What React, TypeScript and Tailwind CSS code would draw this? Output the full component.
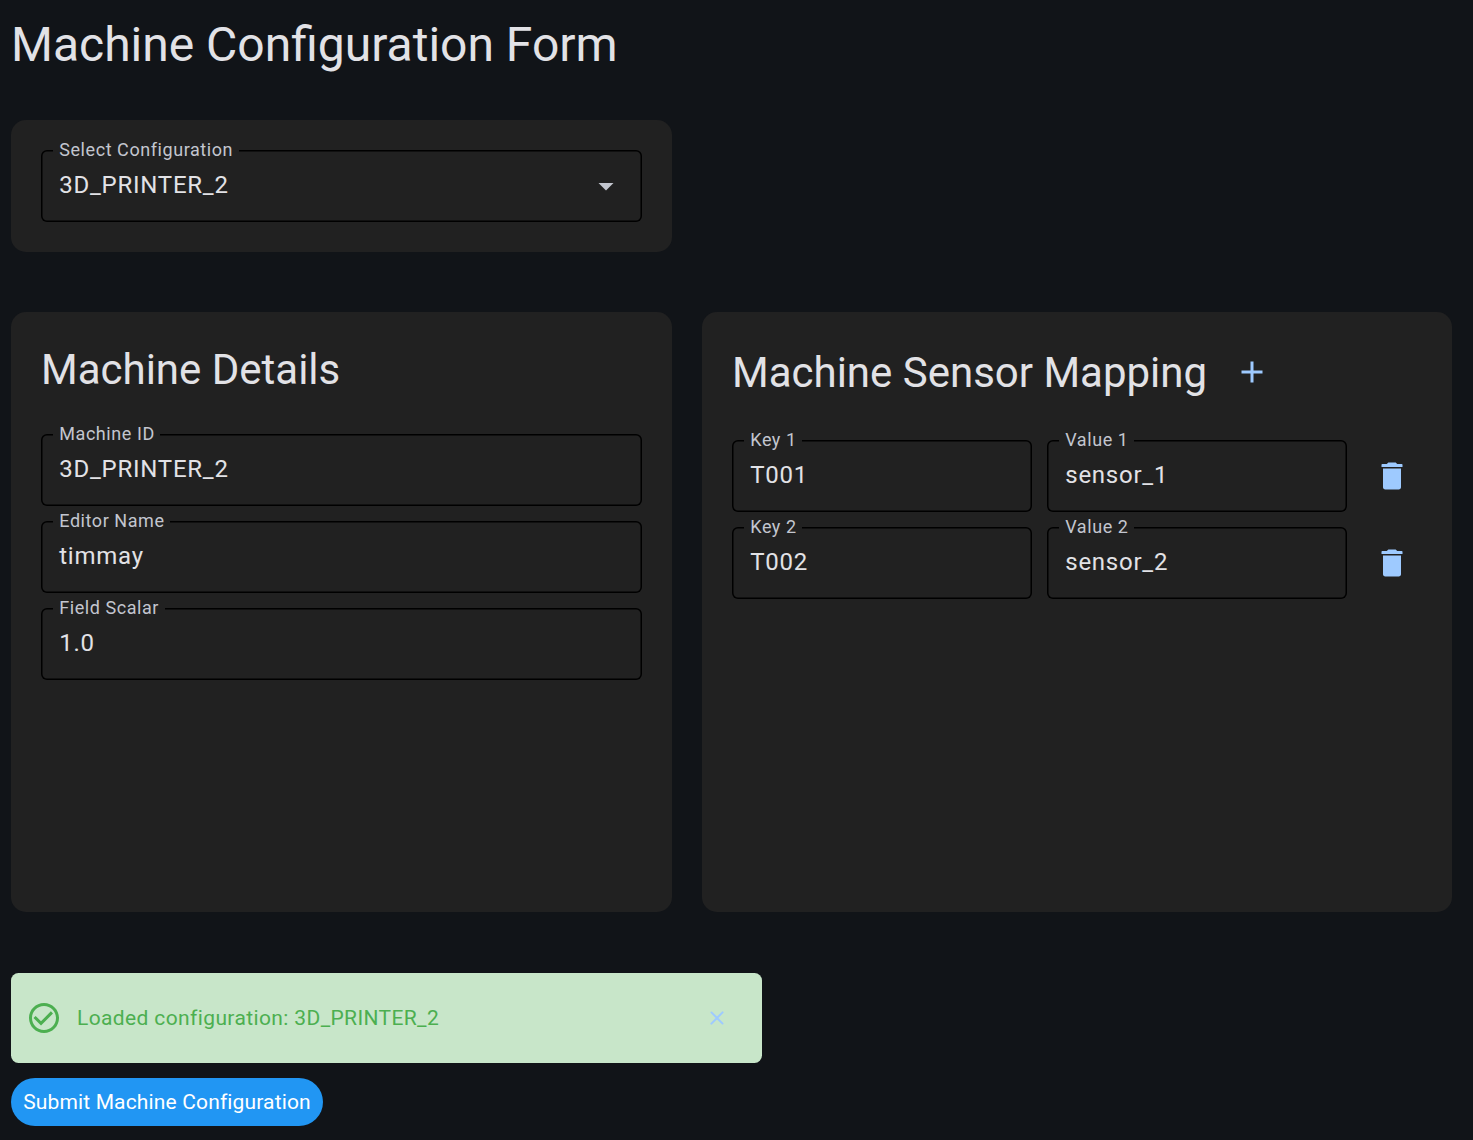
import type { ReactNode } from 'react';

type FieldProps = {
  label: string;
  value: string;
  width?: string;
  trailing?: ReactNode;
};

function Field({ label, value, width = 'w-[601px]', trailing }: FieldProps) {
  return (
    <div
      className={`relative flex h-[72px] shrink-0 items-center justify-between rounded-[6px] pl-[18.25px] pr-6 shadow-[inset_0_0_0_1.5px_#000] ${width}`}
    >
      <span className="absolute left-3 top-[-11px] bg-[#212121] pl-[6.25px] pr-[5.5px] text-[18px] leading-[21px] tracking-[0.5625px] text-[#c3c6cf]">
        {label}
      </span>
      <span className="pb-0.5 text-[24px] leading-9 tracking-[0.75px] text-[#e2e2e6]">{value}</span>
      {trailing}
    </div>
  );
}

function Icon({ d, className }: { d: string; className: string }) {
  return (
    <svg viewBox="0 0 24 24" fill="currentColor" className={className}>
      <path d={d} />
    </svg>
  );
}

const ICONS = {
  dropdown: 'M7 10l5 5 5-5z',
  add: 'M19 13h-6v6h-2v-6H5v-2h6V5h2v6h6v2z',
  trash:
    'M6 19.500c0 .83.67 1.500 1.500 1.500h9c.83 0 1.500-.67 1.500-1.500V7H6v12.500zM18.500 4h-3l-.71-.71c-.18-.18-.44-.29-.7-.29H9.910c-.26 0-.52.110-.7.290L8.500 4h-3c-.28 0-.5.22-.5.5V6h14V4.500c0-.28-.22-.5-.5-.5z',
  check:
    'M16.590 7.580L10 14.170l-3.590-3.580L5 12l5 5 8-8zM12 2C6.480 2 2 6.480 2 12s4.480 10 10 10 10-4.480 10-10S17.520 2 12 2zm0 18c-4.420 0-8-3.580-8-8s3.580-8 8-8 8 3.580 8 8-3.580 8-8 8z',
  close:
    'M18.300 5.710a1 1 0 0 0-1.410 0L12 10.590 7.110 5.700A1 1 0 0 0 5.700 7.110L10.590 12 5.700 16.890a1 1 0 1 0 1.410 1.410L12 13.410l4.890 4.890a1 1 0 0 0 1.410-1.410L13.410 12l4.890-4.890a1 1 0 0 0 0-1.400z',
};

const SENSORS = [
  { key: 'T001', value: 'sensor_1' },
  { key: 'T002', value: 'sensor_2' },
];

export default function App() {
  return (
    <main className="flex h-[1140px] w-[1473px] flex-col items-start overflow-hidden bg-[#111418] pl-[11px] pt-[15px] font-['Roboto',sans-serif] text-[#e2e2e6]">
      <h1 className="text-[48px] leading-[60px]">Machine Configuration Form</h1>

      <section className="mt-[45px] rounded-[15px] bg-[#212121] p-[30px]">
        <Field
          label="Select Configuration"
          value="3D_PRINTER_2"
          trailing={<Icon d={ICONS.dropdown} className="mr-[-6px] size-9 text-[#c3c6cf]" />}
        />
      </section>

      <div className="mt-[60px] flex gap-[30px]">
        <section className="h-[600px] w-[661px] rounded-[15px] bg-[#212121] p-[30px]">
          <h2 className="pt-px text-[42px] leading-[54px]">Machine Details</h2>
          <div className="mt-[37px] flex flex-col gap-[15px]">
            <Field label="Machine ID" value="3D_PRINTER_2" />
            <Field label="Editor Name" value="timmay" />
            <Field label="Field Scalar" value="1.0" />
          </div>
        </section>

        <section className="h-[600px] w-[750px] rounded-[15px] bg-[#212121] p-[30px]">
          <div className="flex h-[60px] items-center gap-[15px]">
            <h2 className="pt-0.5 text-[42px] leading-[54px]">Machine Sensor Mapping</h2>
            <button className="flex size-[60px] items-center justify-center text-[#9ecaff]">
              <Icon d={ICONS.add} className="size-9" />
            </button>
          </div>
          <div className="mt-[38px] flex flex-col gap-[15px]">
            {SENSORS.map((sensor, i) => (
              <div key={sensor.key} className="flex items-center gap-[15px]">
                <Field label={`Key ${i + 1}`} value={sensor.key} width="w-[300px]" />
                <Field label={`Value ${i + 1}`} value={sensor.value} width="w-[300px]" />
                <button className="flex size-[60px] items-center justify-center pb-px text-[#9ecaff]">
                  <Icon d={ICONS.trash} className="size-9" />
                </button>
              </div>
            ))}
          </div>
        </section>
      </div>

      <div className="mt-[61px] flex h-[90px] w-[751px] items-center rounded-[7.5px] bg-[#c8e6c9] px-[15px] text-[#4caf50]">
        <Icon d={ICONS.check} className="size-9" />
        <p className="ml-[15px] flex-1 text-[21px] leading-[30px] tracking-[0.375px]">
          Loaded configuration: 3D_PRINTER_2
        </p>
        <button className="flex size-[60px] items-center justify-center text-[#9ecaff]">
          <Icon d={ICONS.close} className="size-6" />
        </button>
      </div>

      <button className="mt-[15px] flex h-12 w-[312px] items-center justify-center rounded-full bg-[#2196f3] text-[21px] leading-[30px] tracking-[0.15px] text-white">
        Submit Machine Configuration
      </button>
    </main>
  );
}
